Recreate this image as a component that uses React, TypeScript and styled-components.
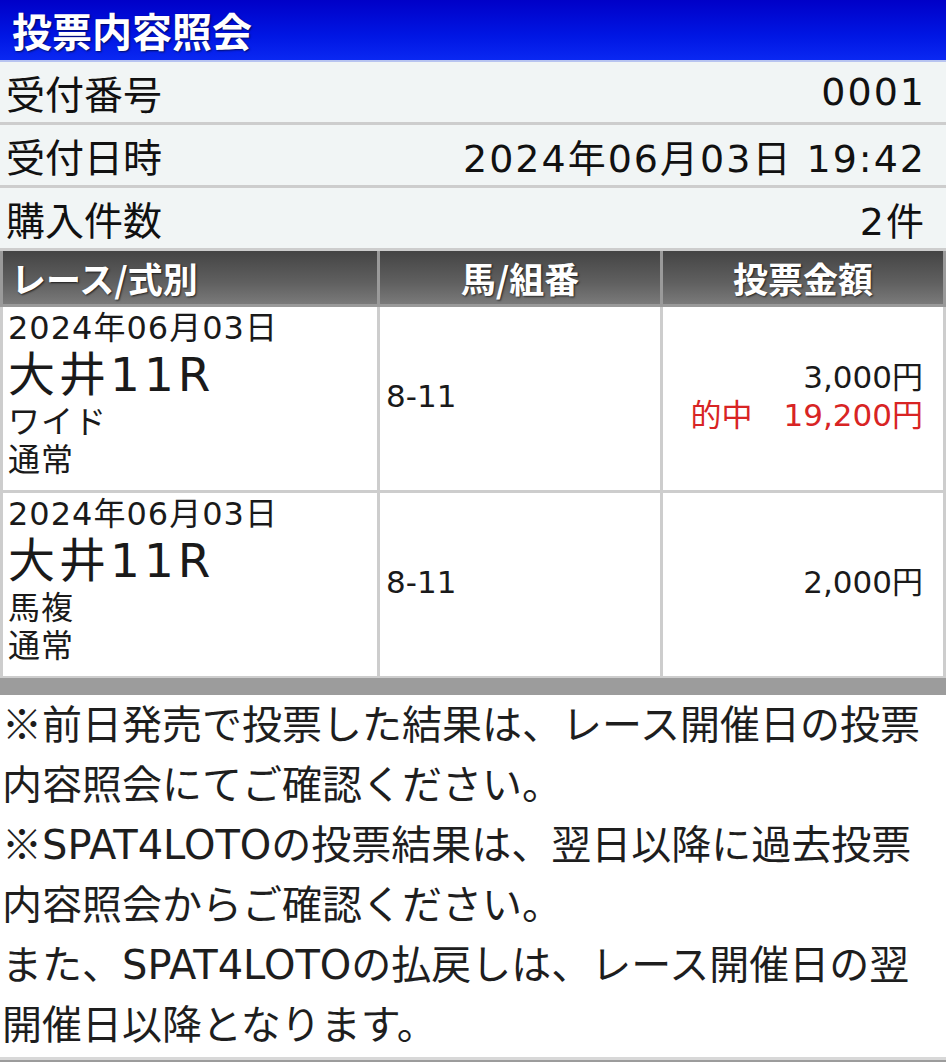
import React from "react";
import styled, { createGlobalStyle } from "styled-components";

const GlobalStyle = createGlobalStyle`
  html, body {
    margin: 0;
    padding: 0;
    background: #ffffff;
  }
  body {
    font-family: "DejaVu Sans", "Noto Sans CJK JP", sans-serif;
    color: #111;
  }
`;

const Page = styled.div`
  width: 946px;
  display: flex;
  flex-direction: column;
`;

const TitleBar = styled.div`
  height: 62px;
  background: linear-gradient(to bottom, #0000c8 0%, #0016e4 60%, #0a28f2 100%);
  border-bottom: 2px solid #b8c4f0;
  display: flex;
  align-items: center;
  padding-left: 12px;
  box-sizing: border-box;
`;

const Title = styled.h1`
  margin: 0;
  font-family: "Noto Sans CJK JP", sans-serif;
  font-size: 40px;
  font-weight: 700;
  color: #fff;
  text-shadow: 1px 1px 2px rgba(0, 0, 0, 0.6);
`;

const InfoRow = styled.div`
  height: 60px;
  background: #f1f5f5;
  border-bottom: 3px solid #cdcdcd;
  display: flex;
  align-items: center;
  justify-content: space-between;
  padding: 0 20px 0 6px;
  font-size: 39px;
`;

const InfoValue = styled.span`
  font-size: 38px;
  letter-spacing: 2px;
`;

const HeadGrid = styled.div`
  display: grid;
  grid-template-columns: 374px 280px 280px;
  gap: 3px;
  padding: 0 3px 3px;
  background: #9a9a9a;
`;

const HeadCell = styled.div<{ $align?: string }>`
  height: 53px;
  background: linear-gradient(to bottom, #444 0%, #606060 60%, #7a7a7a 100%);
  color: #fff;
  font-family: "Noto Sans CJK JP", sans-serif;
  font-size: 35px;
  font-weight: 700;
  display: flex;
  align-items: center;
  justify-content: ${(p) => p.$align || "center"};
  padding-left: ${(p) => (p.$align ? "8px" : "0")};
  text-shadow: 1px 1px 2px rgba(0, 0, 0, 0.7);
`;

const BodyGrid = styled.div`
  display: grid;
  grid-template-columns: 374px 280px 280px;
  gap: 3px;
  padding: 0 3px;
  background: #cdcdcd;
`;

const Cell = styled.div<{ $right?: boolean }>`
  background: #fff;
  height: 183px;
  box-sizing: border-box;
  display: flex;
  flex-direction: column;
  justify-content: center;
  align-items: ${(p) => (p.$right ? "flex-end" : "flex-start")};
  padding: ${(p) => (p.$right ? "0 20px 6px 0" : "0 6px 6px")};
  font-size: 31px;
  line-height: 38px;
  color: #1a1a1a;
`;

const RaceCell = styled(Cell)`
  justify-content: flex-start;
  padding-top: 2px;
  padding-left: 5px;
  font-size: 32px;
  letter-spacing: 1px;
`;

const RaceName = styled.div`
  font-size: 47px;
  line-height: 56px;
  letter-spacing: 4px;
`;

const Hit = styled.div`
  color: #d82424;
`;

const Divider = styled.div`
  height: 17px;
  background: #9c9c9c;
  border-top: 2px solid #cdcdcd;
`;

const Notes = styled.div`
  padding: 0 0 5px 2px;
  font-size: 40px;
  line-height: 60px;
  color: #1e1e1e;
  border-bottom: 10px solid #9c9c9c;
  box-shadow: inset 0 -3px 0 #d8d8d8;
`;

const Mark = styled.span`
  display: inline-block;
  width: 40px;
  text-align: center;
  font-family: "Noto Sans CJK JP", sans-serif;
  line-height: 1;
`;

const bets = [
  {
    date: "2024年06月03日",
    race: "大井11R",
    type: "ワイド",
    kind: "通常",
    horses: "8-11",
    amount: "3,000円",
    hit: "的中\u300019,200円",
  },
  {
    date: "2024年06月03日",
    race: "大井11R",
    type: "馬複",
    kind: "通常",
    horses: "8-11",
    amount: "2,000円",
    hit: "",
  },
];

export default function App() {
  return (
    <Page>
      <GlobalStyle />
      <TitleBar>
        <Title>投票内容照会</Title>
      </TitleBar>
      <InfoRow>
        <span>受付番号</span>
        <InfoValue>0001</InfoValue>
      </InfoRow>
      <InfoRow>
        <span>受付日時</span>
        <InfoValue>2024年06月03日 19:42</InfoValue>
      </InfoRow>
      <InfoRow>
        <span>購入件数</span>
        <InfoValue>2件</InfoValue>
      </InfoRow>
      <HeadGrid>
        <HeadCell $align="flex-start">レース/式別</HeadCell>
        <HeadCell>馬/組番</HeadCell>
        <HeadCell>投票金額</HeadCell>
      </HeadGrid>
      <BodyGrid>
        {bets.map((b, i) => (
          <React.Fragment key={i}>
            <RaceCell>
              <div>{b.date}</div>
              <RaceName>{b.race}</RaceName>
              <div>{b.type}</div>
              <div>{b.kind}</div>
            </RaceCell>
            <Cell>{b.horses}</Cell>
            <Cell $right>
              <div>{b.amount}</div>
              {b.hit && <Hit>{b.hit}</Hit>}
            </Cell>
          </React.Fragment>
        ))}
      </BodyGrid>
      <Divider />
      <Notes>
        <Mark>※</Mark>前日発売で投票した結果は、レース開催日の投票内容照会にてご確認ください。
        <br />
        <Mark>※</Mark>SPAT4LOTOの投票結果は、翌日以降に過去投票内容照会からご確認ください。
        <br />
        また、SPAT4LOTOの払戻しは、レース開催日の翌開催日以降となります。
      </Notes>
    </Page>
  );
}
